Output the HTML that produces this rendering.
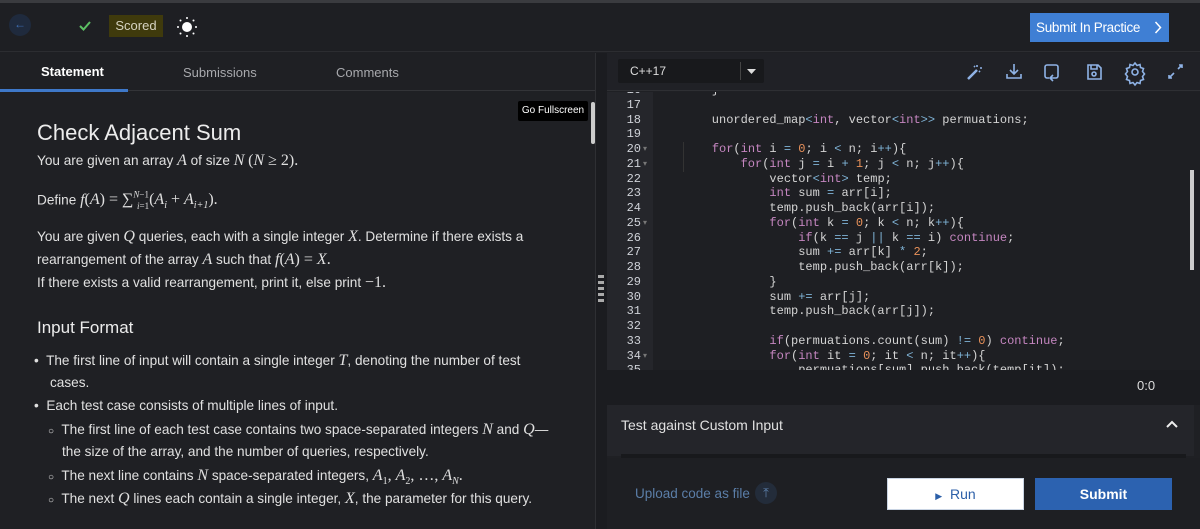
<!DOCTYPE html>
<html><head><meta charset="utf-8"><style>
*{box-sizing:border-box;margin:0;padding:0}
body{width:1200px;height:529px;overflow:hidden;background:#1f2024;font-family:"Liberation Sans",sans-serif;color:#e3e3e3;position:relative}
.abs{position:absolute}
.m{font-family:"Liberation Serif",serif;font-style:italic;font-size:16px}
.mn{font-family:"Liberation Serif",serif;font-size:16px}
.code{font-family:"Liberation Mono",monospace;font-size:12px;color:#d4d4d4;white-space:pre;line-height:14.75px}
.kw{color:#c586c0}.ty{color:#c586c0}.n{color:#e8915a}.op{color:#7fb3d6}
.ln{font-family:"Liberation Mono",monospace;font-size:12px;color:#cfd2d8;line-height:14.75px;text-align:right;white-space:pre}
p.t{font-size:13.6px;color:#e0e0e0;position:absolute;left:37px;white-space:nowrap}
</style></head><body>
<div class="abs" style="left:0;top:0;width:1200px;height:3px;background:#3a3b3f"></div>
<!-- top bar -->
<div class="abs" style="left:0;top:3px;width:1200px;height:49px;background:#1e1f23;border-bottom:1px solid #2c2d31"></div>
<div class="abs" style="left:9px;top:14px;width:22px;height:22px;border-radius:50%;background:#1f2a3d;color:#3f6fb5;font-size:12px;text-align:center;line-height:21px">←</div>
<svg class="abs" style="left:78px;top:20px" width="14" height="12"><path d="M2 6 L5.5 9.5 L12 2" stroke="#5cbf63" stroke-width="2" fill="none"/></svg>
<div class="abs" style="left:109px;top:15px;width:54px;height:22px;background:#3f3a0c;color:#d6d3c1;font-size:13px;text-align:center;line-height:22px">Scored</div>
<svg class="abs" style="left:176px;top:16px" width="22" height="22"><circle cx="11" cy="11" r="5" fill="#fff"/><g fill="#fff"><circle cx="11" cy="2" r="1"/><circle cx="11" cy="20" r="1"/><circle cx="2" cy="11" r="1"/><circle cx="20" cy="11" r="1"/><circle cx="4.5" cy="4.5" r="1"/><circle cx="17.5" cy="4.5" r="1"/><circle cx="4.5" cy="17.5" r="1"/><circle cx="17.5" cy="17.5" r="1"/></g></svg>
<div class="abs" style="left:1030px;top:13px;width:139px;height:29px;background:#3f7fd4;color:#fff;font-size:13.5px;line-height:29px;padding-left:6px;letter-spacing:-0.3px">Submit In Practice</div>
<svg class="abs" style="left:1154px;top:21px" width="8" height="13"><path d="M1.5 1l5 5.5-5 5.5" stroke="#fff" stroke-width="1.5" fill="none"/></svg>
<!-- tabs -->
<div class="abs" style="left:0;top:53px;width:595px;height:38px;background:#1f2024;border-bottom:1px solid #333438"></div>
<div class="abs" style="left:41px;top:64px;font-size:13px;font-weight:bold;color:#fff">Statement</div>
<div class="abs" style="left:0;top:89px;width:128px;height:3px;background:#3e78c9"></div>
<div class="abs" style="left:183px;top:65px;font-size:13px;color:#a8a9ad">Submissions</div>
<div class="abs" style="left:336px;top:65px;font-size:13px;color:#a8a9ad">Comments</div>
<!-- left content -->
<div class="abs" style="left:518px;top:101px;width:70px;height:20px;background:#000;color:#fff;font-size:10px;line-height:20px;text-align:center;border-radius:2px">Go Fullscreen</div>
<div class="abs" style="left:591px;top:102px;width:4px;height:42px;background:#ccc;border-radius:2px"></div>
<div class="abs" style="left:37px;top:120px;font-size:22px;color:#ececec">Check Adjacent Sum</div>
<p class="t" style="top:152px">You are given an array <span class="m">A</span> of size <span class="m">N</span> <span class="mn">(<i>N</i> ≥ 2).</span></p>
<p class="t" style="top:190px">Define <span class="m">f</span><span class="mn">(<i>A</i>) = ∑<sup style="font-size:9px"><i>N</i>−1</sup><sub style="font-size:9px;margin-left:-12px"><i>i</i>=1</sub>(<i>A<sub style="font-size:10px">i</sub></i> + <i>A<sub style="font-size:10px">i+1</sub></i>).</span></p>
<p class="t" style="top:228px">You are given <span class="m">Q</span> queries, each with a single integer <span class="m">X</span>. Determine if there exists a</p>
<p class="t" style="top:251px">rearrangement of the array <span class="m">A</span> such that <span class="m">f</span><span class="mn">(<i>A</i>) = <i>X</i>.</span></p>
<p class="t" style="top:274px">If there exists a valid rearrangement, print it, else print <span class="mn">−1.</span></p>
<div class="abs" style="left:37px;top:318px;font-size:17px;color:#ececec">Input Format</div>
<p class="t" style="top:352px"><span style="margin-left:-3px">•</span>&nbsp; The first line of input will contain a single integer <span class="m">T</span>, denoting the number of test</p>
<p class="t" style="top:375px;left:50px">cases.</p>
<p class="t" style="top:398px"><span style="margin-left:-3px">•</span>&nbsp; Each test case consists of multiple lines of input.</p>
<p class="t" style="top:421px;left:48px"><span style="font-size:10px">○</span>&nbsp; The first line of each test case contains two space-separated integers <span class="m">N</span> and <span class="m">Q</span>—</p>
<p class="t" style="top:444px;left:62px">the size of the array, and the number of queries, respectively.</p>
<p class="t" style="top:467px;left:48px"><span style="font-size:10px">○</span>&nbsp; The next line contains <span class="m">N</span> space-separated integers, <span class="mn"><i>A</i><sub style="font-size:10px">1</sub>, <i>A</i><sub style="font-size:10px">2</sub>, …, <i>A<sub style="font-size:10px">N</sub></i>.</span></p>
<p class="t" style="top:490px;left:48px"><span style="font-size:10px">○</span>&nbsp; The next <span class="m">Q</span> lines each contain a single integer, <span class="m">X</span>, the parameter for this query.</p>
<!-- divider -->
<div class="abs" style="left:595px;top:53px;width:12px;height:476px;background:#1b1c20;border-left:1px solid #2e2f33"></div>
<div class="abs" style="left:598px;top:275px;width:6px;height:27px;border-left:3px dotted #aaa;border-right:3px dotted #aaa"></div>
<!-- editor toolbar -->
<div class="abs" style="left:607px;top:53px;width:593px;height:38px;background:#202126;border-bottom:1px solid #2e2f33"></div>
<div class="abs" style="left:618px;top:59px;width:146px;height:24px;background:#18191c;border-radius:2px;font-size:12px;line-height:24px;padding-left:12px;color:#ddd">C++17</div>
<div class="abs" style="left:740px;top:62px;width:1px;height:18px;background:#444"></div>
<svg class="abs" style="left:747px;top:69px" width="9" height="6"><path d="M0 0H9L4.5 5Z" fill="#ddd"/></svg>
<svg class="abs" style="left:960px;top:58px" width="230" height="30" fill="none" stroke="#8fb3e6" stroke-width="1.6">
<path d="M8 21 L17 12" stroke-width="2.5"/><path d="M17 7v2M20 10h2M14 8l1 1M19 13l1 1"/>
<path d="M54 6v10M50 12l4 4 4-4M47 16v4h14v-4"/>
<path d="M89 20h-2a2 2 0 0 1-2-2V9a2 2 0 0 1 2-2h9a2 2 0 0 1 2 2v9a2 2 0 0 1-2 2h-5M93 17l-3 3 3 3" />
<path d="M128 7h10l3 3v11h-13z M131 7v4h6V7"/><circle cx="134" cy="16" r="2"/>
<circle cx="175" cy="14" r="3"/><path d="M175 5l2 2.5 3-1 .5 3 3 1-1 3 2 2.5-2 2.5 1 3-3 1-.5 3-3-1-2 2.5-2-2.5-3 1-.5-3-3-1 1-3-2-2.5 2-2.5-1-3 3-1 .5-3 3 1z"/>
<path d="M214 15l-5 5M209 17v3h3M218 11l4-4M219 7h3v3"/>
</svg>
<!-- code area -->
<div class="abs" style="left:607px;top:92px;width:593px;height:278px;background:#1e1f23;overflow:hidden">
<div class="abs" style="left:0;top:0;width:46px;height:278px;background:#25262b"></div>
<div class="abs ln" style="left:0;top:-9px;width:34px">16
17
18
19
20
21
22
23
24
25
26
27
28
29
30
31
32
33
34
35</div>
<div class="abs" style="left:36px;top:50px;font-size:8px;color:#777;line-height:14.75px">▾<br>▾<br><br><br><br>▾<br><br><br><br><br><br><br><br><br>▾</div>
<div class="abs" style="left:76px;top:50px;width:1px;height:30px;background:#333"></div>
<div class="abs code" style="left:76px;top:-9px">    }

    unordered_map<span class="op">&lt;</span><span class="ty">int</span>, vector<span class="op">&lt;</span><span class="ty">int</span><span class="op">&gt;&gt;</span> permuations;

    <span class="kw">for</span>(<span class="ty">int</span> i <span class="op">=</span> <span class="n">0</span>; i <span class="op">&lt;</span> n; i<span class="op">++</span>){
        <span class="kw">for</span>(<span class="ty">int</span> j <span class="op">=</span> i <span class="op">+</span> <span class="n">1</span>; j <span class="op">&lt;</span> n; j<span class="op">++</span>){
            vector<span class="op">&lt;</span><span class="ty">int</span><span class="op">&gt;</span> temp;
            <span class="ty">int</span> sum <span class="op">=</span> arr[i];
            temp.push_back(arr[i]);
            <span class="kw">for</span>(<span class="ty">int</span> k <span class="op">=</span> <span class="n">0</span>; k <span class="op">&lt;</span> n; k<span class="op">++</span>){
                <span class="kw">if</span>(k <span class="op">==</span> j <span class="op">||</span> k <span class="op">==</span> i) <span class="kw">continue</span>;
                sum <span class="op">+=</span> arr[k] <span class="op">*</span> <span class="n">2</span>;
                temp.push_back(arr[k]);
            }
            sum <span class="op">+=</span> arr[j];
            temp.push_back(arr[j]);

            <span class="kw">if</span>(permuations.count(sum) <span class="op">!=</span> <span class="n">0</span>) <span class="kw">continue</span>;
            <span class="kw">for</span>(<span class="ty">int</span> it <span class="op">=</span> <span class="n">0</span>; it <span class="op">&lt;</span> n; it<span class="op">++</span>){
                permuations[sum].push_back(temp[it]);</div>
</div>
<div class="abs" style="left:1190px;top:170px;width:4px;height:100px;background:#ccc"></div>
<!-- 0:0 row -->
<div class="abs" style="left:607px;top:370px;width:593px;height:35px;background:#1b1c20"></div>
<div class="abs" style="left:1137px;top:378px;font-size:13px;color:#ddd">0:0</div>
<div class="abs" style="left:607px;top:405px;width:587px;height:51px;background:#24252a"></div>
<div class="abs" style="left:621px;top:417px;font-size:14px;color:#e0e0e0">Test against Custom Input</div>
<svg class="abs" style="left:1165px;top:419px" width="14" height="10"><path d="M2 8l5-5 5 5" stroke="#eee" stroke-width="2" fill="none"/></svg>
<div class="abs" style="left:621px;top:454px;width:565px;height:4px;background:#18191c"></div>
<!-- bottom bar -->
<div class="abs" style="left:607px;top:458px;width:593px;height:71px;background:#1e1f23"></div>
<div class="abs" style="left:635px;top:486px;font-size:13.5px;color:#5b7ea8">Upload code as file</div>
<div class="abs" style="left:755px;top:482px;width:22px;height:22px;border-radius:50%;background:#232c3a;color:#5b7ea8;font-size:13px;text-align:center;line-height:22px">⤒</div>
<div class="abs" style="left:887px;top:478px;width:137px;height:32px;background:#fff;border:1px solid #c9d4e3;color:#2c5fa8;font-size:14px;text-align:center;line-height:30px"><span style="font-size:9px">▶</span>&nbsp; Run</div>
<div class="abs" style="left:1035px;top:478px;width:137px;height:32px;background:#2c62b0;color:#fff;font-size:14px;font-weight:bold;text-align:center;line-height:32px">Submit</div>
</body></html>
